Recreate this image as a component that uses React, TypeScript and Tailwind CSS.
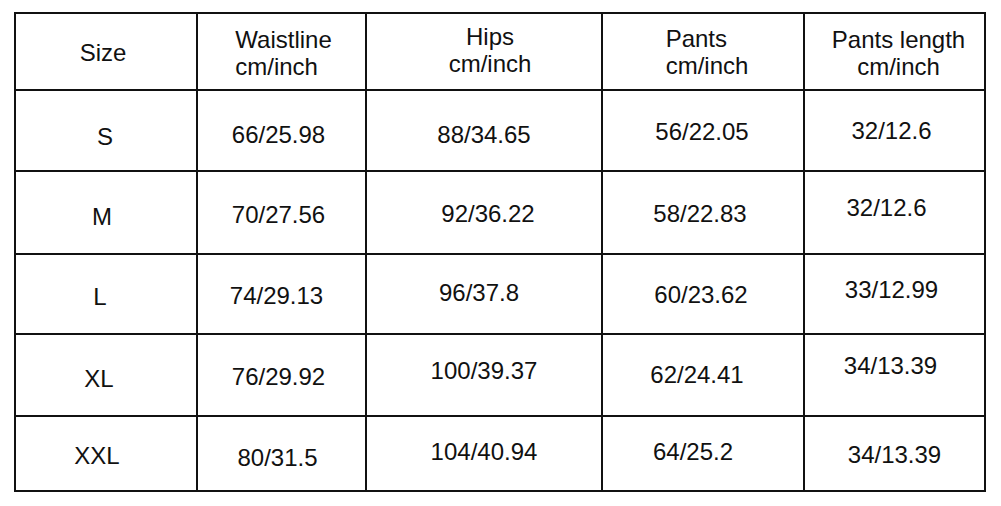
import React from 'react'

type Cell = { text: string[]; shift: string; align?: string }

const header: Cell[] = [
  { text: ['Size'], shift: 'translate-x-[-3px] translate-y-[1px]' },
  { text: ['Waistline', 'cm/inch'], shift: 'translate-x-[2px] translate-y-[1px]', align: 'text-left' },
  { text: ['Hips', 'cm/inch'], shift: 'translate-x-[6px] translate-y-[-2px]' },
  { text: ['Pants', 'cm/inch'], shift: 'translate-x-[4px] translate-y-[0px]', align: 'text-left' },
  { text: ['Pants length', 'cm/inch'], shift: 'translate-x-[4px] translate-y-[1px]' },
]

const rows: Cell[][] = [
  [
    { text: ['S'], shift: 'translate-x-[-1px] translate-y-[6px]' },
    { text: ['66/25.98'], shift: 'translate-x-[-3px] translate-y-[4px]' },
    { text: ['88/34.65'], shift: 'translate-x-[0px] translate-y-[4px]' },
    { text: ['56/22.05'], shift: 'translate-x-[-1px] translate-y-[1px]' },
    { text: ['32/12.6'], shift: 'translate-x-[-3px] translate-y-[0px]' },
  ],
  [
    { text: ['M'], shift: 'translate-x-[-4px] translate-y-[4px]' },
    { text: ['70/27.56'], shift: 'translate-x-[-3px] translate-y-[2px]' },
    { text: ['92/36.22'], shift: 'translate-x-[4px] translate-y-[1px]' },
    { text: ['58/22.83'], shift: 'translate-x-[-3px] translate-y-[1px]' },
    { text: ['32/12.6'], shift: 'translate-x-[-8px] translate-y-[-5px]' },
  ],
  [
    { text: ['L'], shift: 'translate-x-[-6px] translate-y-[2px]' },
    { text: ['74/29.13'], shift: 'translate-x-[-5px] translate-y-[1px]' },
    { text: ['96/37.8'], shift: 'translate-x-[-5px] translate-y-[-2px]' },
    { text: ['60/23.62'], shift: 'translate-x-[-2px] translate-y-[0px]' },
    { text: ['33/12.99'], shift: 'translate-x-[-3px] translate-y-[-5px]' },
  ],
  [
    { text: ['XL'], shift: 'translate-x-[-7px] translate-y-[3px]' },
    { text: ['76/29.92'], shift: 'translate-x-[-3px] translate-y-[1px]' },
    { text: ['100/39.37'], shift: 'translate-x-[0px] translate-y-[-5px]' },
    { text: ['62/24.41'], shift: 'translate-x-[-6px] translate-y-[-1px]' },
    { text: ['34/13.39'], shift: 'translate-x-[-4px] translate-y-[-10px]' },
  ],
  [
    { text: ['XXL'], shift: 'translate-x-[-9px] translate-y-[2px]' },
    { text: ['80/31.5'], shift: 'translate-x-[-4px] translate-y-[4px]' },
    { text: ['104/40.94'], shift: 'translate-x-[0px] translate-y-[-2px]' },
    { text: ['64/25.2'], shift: 'translate-x-[-10px] translate-y-[-2px]' },
    { text: ['34/13.39'], shift: 'translate-x-[0px] translate-y-[1px]' },
  ],
]

function TableCell({ cell }: { cell: Cell }) {
  return (
    <div className="flex items-center justify-center border-r-2 border-b-2 border-[#111]">
      <div className={`${cell.shift} ${cell.align ?? 'text-center'} leading-[27px]`}>
        {cell.text.map((line) => (
          <div key={line}>{line}</div>
        ))}
      </div>
    </div>
  )
}

export default function App() {
  return (
    <div className="w-[1001px] h-[506px] bg-white pt-[12px] pl-[14px] font-['Liberation_Sans',Arial,sans-serif] text-[24px] text-[#111]">
      {/* size chart */}
      <div className="grid w-max grid-cols-[182px_169px_236px_202px_181px] grid-rows-[77px_81px_83px_80px_82px_75px] border-l-2 border-t-2 border-[#111]">
        {header.map((cell, i) => (
          <TableCell key={`h${i}`} cell={cell} />
        ))}
        {rows.map((row, r) =>
          row.map((cell, c) => <TableCell key={`${r}-${c}`} cell={cell} />)
        )}
      </div>
    </div>
  )
}
